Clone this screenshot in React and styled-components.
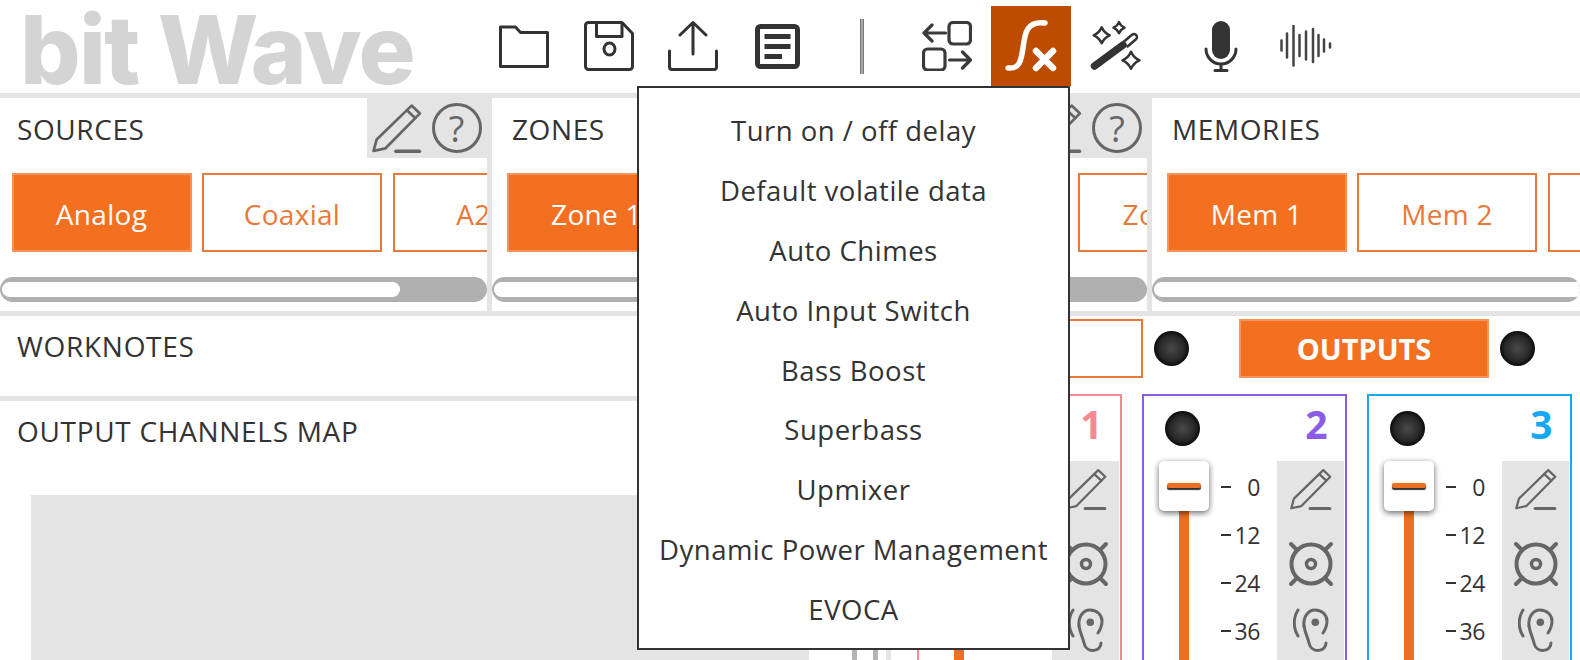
import styled, { createGlobalStyle } from "styled-components";

const GlobalStyle = createGlobalStyle`
  html, body {
    margin: 0;
    padding: 0;
    background: #fff;
    overflow: hidden;
  }
  body {
    font-family: "Open Sans", "Noto Sans", sans-serif;
    color: #333;
  }
`;

const menuItems = [
  "Turn on / off delay",
  "Default volatile data",
  "Auto Chimes",
  "Auto Input Switch",
  "Bass Boost",
  "Superbass",
  "Upmixer",
  "Dynamic Power Management",
  "EVOCA",
];

const channels = [
  { id: 1, color: "#f58a90" },
  { id: 2, color: "#8b5ce5" },
  { id: 3, color: "#16a8f3" },
];

const scaleMarks = ["0", "12", "24", "36"];

/* toolbar icons */
function FolderIcon() {
  return (
    <svg width="50" height="43" viewBox="0 0 50 43" fill="none" stroke="#333" strokeWidth="3" strokeLinejoin="round">
      <path d="M1.5 2h15l5 5.500h27V41.500h-47z" />
    </svg>
  );
}

function SaveIcon() {
  return (
    <svg width="50" height="50" viewBox="0 0 50 50" fill="none" stroke="#333" strokeWidth="3" strokeLinejoin="round">
      <path d="M4 1.500h34l10.500 11V45.500a3 3 0 0 1-3 3H4.500a3 3 0 0 1-3-3V4a3 3 0 0 1 2.500-2.500z" />
      <path d="M12.500 1.500V15.500h25.500V1.500" />
      <ellipse cx="25.500" cy="28" rx="5.500" ry="6" />
    </svg>
  );
}

function UploadIcon() {
  return (
    <svg width="50" height="50" viewBox="0 0 50 50" fill="none" stroke="#333" strokeWidth="3" strokeLinecap="round" strokeLinejoin="round">
      <path d="M25 2V33M12 14L25 1.500L38 14" />
      <path d="M1.500 30V46a2.500 2.500 0 0 0 2.500 2.500H46a2.500 2.500 0 0 0 2.500-2.500V30" />
    </svg>
  );
}

function DocIcon() {
  return (
    <svg width="45" height="45" viewBox="0 0 45 45" fill="none" stroke="#333" strokeWidth="5">
      <rect x="2.500" y="2.500" width="40" height="40" rx="3" />
      <path d="M9.500 12.500H35.500M9.500 22.500H35.500M9.500 32.500H27" />
    </svg>
  );
}

function SwapIcon() {
  return (
    <svg width="50" height="50" viewBox="0 0 50 50" fill="none" stroke="#3a3a3a" strokeWidth="3.200" strokeLinecap="round" strokeLinejoin="round">
      <rect x="27" y="1.500" width="21.500" height="21.500" rx="4" />
      <rect x="1.500" y="28" width="21.500" height="21" rx="4" />
      <path d="M23.500 12H2M10 4L2 12L10 20" />
      <path d="M27.500 39H48.500M40.500 31L48.500 39L40.500 47" />
    </svg>
  );
}

function FxIcon() {
  return (
    <svg width="80" height="80" viewBox="0 0 80 80" fill="none" stroke="#fff" strokeLinecap="round">
      <path d="M17 62C28 63 30 56 32 42C34 26 36 15 54 17" strokeWidth="5.500" />
      <path d="M45 45L62 62M62 45L45 62" strokeWidth="6.500" />
    </svg>
  );
}

// four point sparkle, slightly hollow sides
const sparkle = (x, y, r) => {
  const c = r * 0.3;
  return `M${x} ${y - r}Q${x + c} ${y - c} ${x + r} ${y}Q${x + c} ${y + c} ${x} ${y + r}Q${x - c} ${y + c} ${x - r} ${y}Q${x - c} ${y - c} ${x} ${y - r}z`;
};

function WandIcon() {
  return (
    <svg width="51" height="50" viewBox="0 0 51 50" fill="none" stroke="#333" strokeLinecap="round" strokeLinejoin="round">
      <path d="M4.500 45L33 24" strokeWidth="7.500" />
      <path d="M34 20.500L42 13.800a3 3 0 0 1 4 4.500L37.500 25.500" strokeWidth="2.500" />
      <path d={sparkle(11.7, 14.3, 8)} strokeWidth="2.500" />
      <path d={sparkle(29, 6.7, 5.500)} strokeWidth="2.500" />
      <path d={sparkle(41, 39.3, 8.500)} strokeWidth="2.500" />
    </svg>
  );
}

function MicIcon() {
  return (
    <svg width="34" height="51" viewBox="0 0 34 51" fill="none" stroke="#333" strokeLinecap="round">
      <rect x="8" y="0" width="18" height="38" rx="9" fill="#333" stroke="none" />
      <path d="M2 28a15 15 0 0 0 30 0M17 43V49.500M11 49.500H23" strokeWidth="3" />
    </svg>
  );
}

function WaveIcon() {
  const bars = [
    [1.500, 5], [7, 12], [13.500, 20], [19.500, 10.500], [26, 14],
    [33, 16.500], [38.500, 10.500], [44, 6], [50, 2],
  ];
  return (
    <svg width="52" height="42" viewBox="0 0 52 42" stroke="#444" strokeWidth="2.500" strokeLinecap="round">
      {bars.map(([x, h]) => (
        <line key={x} x1={x} x2={x} y1={20.500 - h} y2={20.500 + h} />
      ))}
    </svg>
  );
}

/* panel and channel icons */
function PencilIcon({ size = 50 }) {
  return (
    <svg width={size} height={size} viewBox="0 0 48 48" fill="none" stroke="#666" strokeWidth="2.600" strokeLinejoin="round" strokeLinecap="round">
      <path d="M1.500 46L4.500 35L38 2.500L46 10L13 43.500z" />
      <path d="M33.500 7L41.500 14.500" />
      <path d="M23 46.300H45.500" strokeWidth="3.500" />
    </svg>
  );
}

function SpeakerIcon() {
  return (
    <svg width="46" height="46" viewBox="0 0 46 46" fill="none" stroke="#666" strokeLinecap="round">
      <circle cx="23" cy="23" r="19.500" strokeWidth="4" />
      <circle cx="23" cy="23" r="4.500" strokeWidth="3.500" />
      <path d="M3 3L9 9M43 3L37 9M3 43L9 37M43 43L37 37" strokeWidth="4" />
    </svg>
  );
}

function EarIcon() {
  return (
    <svg width="36" height="44" viewBox="0 0 36 44" fill="none" stroke="#666" strokeWidth="3" strokeLinecap="round">
      <path d="M11 18C10 9 15 2 22 2C29 2 34 7 34 13C34 18 32 22 30 25" />
      <path d="M11 18C12 25 15 30 16 35C17 40 21 42.500 25 42.500C30 42.500 33 39 33 35" />
      <path d="M5 2C0 10 0 20 5 28" />
      <circle cx="22.300" cy="14.300" r="3.800" fill="#666" stroke="none" />
    </svg>
  );
}

function SourcePanel({ title, items, gutter, thumb, inset, columns }) {
  return (
    <Panel>
      <PanelHead>
        <PanelTitle $inset={inset}>{title}</PanelTitle>
        {columns && (
          <PanelTools>
            <ToolSlot><PencilIcon /></ToolSlot>
            <ToolSlot><HelpBadge>?</HelpBadge></ToolSlot>
          </PanelTools>
        )}
      </PanelHead>
      <ButtonStrip $gutter={gutter}>
        {items.map((item, i) => (
          <StripButton key={item} $active={i === 0}>{item}</StripButton>
        ))}
      </ButtonStrip>
      <ScrollTrack>
        <ScrollThumb style={{ width: thumb }} />
      </ScrollTrack>
    </Panel>
  );
}

function Channel({ id, color }) {
  return (
    <ChannelCard $color={color}>
      <ChannelTop>
        <Led />
        <ChannelNumber $color={color}>{id}</ChannelNumber>
      </ChannelTop>
      <ChannelBody>
        <Fader>
          <FaderKnob><FaderMark /></FaderKnob>
          <FaderTrack />
        </Fader>
        <Scale>
          {scaleMarks.map((mark) => (
            <ScaleRow key={mark}>
              <Tick />
              {mark}
            </ScaleRow>
          ))}
        </Scale>
        <ChannelTools>
          <PencilSlot><PencilIcon size={42} /></PencilSlot>
          <SpeakerSlot><SpeakerIcon /></SpeakerSlot>
          <EarSlot><EarIcon /></EarSlot>
        </ChannelTools>
      </ChannelBody>
    </ChannelCard>
  );
}

export default function App() {
  return (
    <Page>
      <GlobalStyle />
      <Header>
        <Logo>bit Wave</Logo>
        <Toolbar>
          <ToolButton><FolderIcon /></ToolButton>
          <ToolButton><SaveIcon /></ToolButton>
          <ToolButton><UploadIcon /></ToolButton>
          <ToolButton><DocIcon /></ToolButton>
          <ToolButton><Divider /></ToolButton>
          <ToolButton><SwapIcon /></ToolButton>
          <ToolButton $active><FxIcon /></ToolButton>
          <ToolButton><WandIcon /></ToolButton>
          <ToolButton $spaced><MicIcon /></ToolButton>
          <ToolButton><WaveIcon /></ToolButton>
        </Toolbar>
      </Header>

      <PanelRow>
        <SourcePanel title="SOURCES" items={["Analog", "Coaxial", "A2B"]} gutter={11.5} inset={17} thumb={398} columns />
        <SourcePanel title="ZONES" items={["Zone 1", "Zone 2", "Zone 3", "Zone 4"]} gutter={15} inset={20.5} thumb={500} columns />
        <SourcePanel title="MEMORIES" items={["Mem 1", "Mem 2", "Mem 3"]} gutter={14.5} inset={20} thumb={480} />
      </PanelRow>

      <Lower>
        <LeftColumn>
          <Worknotes>
            <SectionTitle>WORKNOTES</SectionTitle>
          </Worknotes>
          <OutputMap>
            <SectionTitle>OUTPUT CHANNELS MAP</SectionTitle>
            <MapArea>
              <MapCanvas />
              <MapBar />
              <MapBar />
            </MapArea>
          </OutputMap>
        </LeftColumn>
        <RightColumn>
          <ModeRow>
            <ModeButton>INPUTS</ModeButton>
            <ModeLed />
            <ModeButton $active>OUTPUTS</ModeButton>
            <ModeLed />
          </ModeRow>
          <ChannelRow>
            {channels.map((c) => (
              <Channel key={c.id} id={c.id} color={c.color} />
            ))}
          </ChannelRow>
        </RightColumn>
      </Lower>

      <Menu>
        {menuItems.map((item) => (
          <MenuItem key={item}>{item}</MenuItem>
        ))}
      </Menu>
    </Page>
  );
}

const Page = styled.div`
  position: relative;
  width: 1580px;
  height: 660px;
  overflow: hidden;
  background: #e4e4e4;
`;

const Header = styled.header`
  height: 93px;
  background: #fff;
  display: flex;
  box-sizing: border-box;
  padding-left: 20px;
`;

const Logo = styled.div`
  width: 464px;
  flex: none;
  font-family: Inter, "Liberation Sans", sans-serif;
  font-weight: 800;
  font-size: 95px;
  line-height: 99px;
  letter-spacing: -1.700px;
  color: #d4d4d4;
  white-space: nowrap;
`;

const Toolbar = styled.nav`
  display: flex;
  gap: 4.500px;
`;

const ToolButton = styled.div`
  width: 80px;
  height: 80px;
  margin-top: 6px;
  margin-left: ${(p) => (p.$spaced ? "21px" : "0")};
  display: flex;
  align-items: center;
  justify-content: center;
  background: ${(p) => (p.$active ? "#bd4b00" : "transparent")};
`;

const Divider = styled.div`
  width: 1.500px;
  height: 55px;
  background: #aaa;
  border: solid #777;
  border-width: 0 1px;
`;

const PanelRow = styled.div`
  display: grid;
  grid-template-columns: 486.500px 655.500px 1fr;
  column-gap: 5px;
  margin-top: 5px;
  height: 213px;
`;

const Panel = styled.section`
  background: #fff;
  overflow: hidden;
  display: flex;
  flex-direction: column;
`;

const PanelHead = styled.div`
  height: 60px;
  flex: none;
  display: flex;
  justify-content: space-between;
`;

const PanelTitle = styled.h2`
  margin: 0;
  padding: 11px 0 0 ${(p) => p.$inset}px;
  font-size: 28px;
  line-height: 40px;
  font-weight: 400;
  letter-spacing: 0.600px;
  color: #333;
`;

const PanelTools = styled.div`
  display: flex;
`;

const ToolSlot = styled.div`
  width: 60px;
  height: 60px;
  background: #e4e4e4;
  display: flex;
  align-items: center;
  justify-content: center;
`;

const HelpBadge = styled.div`
  width: 44px;
  height: 44px;
  border: 3px solid #666;
  border-radius: 50%;
  display: flex;
  align-items: center;
  justify-content: center;
  font-size: 36px;
  font-weight: 400;
  color: #666;
`;

const ButtonStrip = styled.div`
  display: flex;
  gap: 10.500px;
  margin-top: 15px;
  height: 79px;
  flex: none;
  padding-left: ${(p) => p.$gutter}px;
`;

const StripButton = styled.div`
  width: 180px;
  flex: none;
  box-sizing: border-box;
  padding-top: 2px;
  display: flex;
  align-items: center;
  justify-content: center;
  border: 2px solid ${(p) => (p.$active ? "#f8955c" : "#e8793a")};
  background: ${(p) => (p.$active ? "#f37021" : "#fff")};
  color: ${(p) => (p.$active ? "#fff" : "#e8793a")};
  font-size: 28px;
  letter-spacing: 0.300px;
  white-space: nowrap;
`;

const ScrollTrack = styled.div`
  margin-top: 25px;
  height: 25px;
  flex: none;
  box-sizing: border-box;
  padding: 5px 2px;
  background: #b0b0b0;
  border-radius: 12.500px;
  overflow: hidden;
`;

const ScrollThumb = styled.div`
  height: 15px;
  background: #fff;
  border-radius: 8px;
`;

const Lower = styled.div`
  display: grid;
  grid-template-columns: 886px 1fr;
  column-gap: 5px;
  margin-top: 5px;
  height: 344px;
`;

const LeftColumn = styled.div`
  display: flex;
  flex-direction: column;
  gap: 5px;
  min-height: 0;
`;

const Worknotes = styled.section`
  height: 80px;
  flex: none;
  background: #fff;
`;

const SectionTitle = styled.h2`
  margin: 0;
  padding: 10px 0 0 17px;
  font-size: 28px;
  line-height: 40px;
  font-weight: 400;
  letter-spacing: 0.700px;
  color: #333;
`;

const OutputMap = styled.section`
  flex: 1;
  min-height: 0;
  background: #fff;
`;

const MapArea = styled.div`
  display: flex;
  height: 200px;
  margin-top: 44px;
  padding-left: 30.500px;
`;

const MapCanvas = styled.div`
  width: 778.500px;
  background: #e4e4e4;
  margin-right: 27px;
`;

const MapBar = styled.div`
  width: 5px;
  margin-left: 16px;
  background: #b4b4b4;
`;

const RightColumn = styled.div`
  background: #fff;
  min-width: 0;
  overflow: hidden;
`;

const ModeRow = styled.div`
  display: flex;
  align-items: center;
  height: 78px;
  padding: 3px 0 16px 2px;
  box-sizing: border-box;
`;

const ModeButton = styled.div`
  width: 250px;
  height: 59px;
  flex: none;
  box-sizing: border-box;
  display: flex;
  align-items: center;
  justify-content: center;
  border: 2px solid ${(p) => (p.$active ? "#f8955c" : "#e8793a")};
  background: ${(p) => (p.$active ? "#f37021" : "#fff")};
  color: ${(p) => (p.$active ? "#fff" : "#e8793a")};
  font-size: 29px;
  font-weight: 700;
  margin-right: 10.500px;
`;

const Led = styled.div`
  width: 35px;
  height: 35px;
  flex: none;
  border-radius: 50%;
  background: radial-gradient(circle, #4a4a4a 0%, #262626 52%, #000 78%);
`;

const ModeLed = styled(Led)`
  margin-right: 50.500px;
`;

const ChannelRow = styled.div`
  display: flex;
  gap: 20px;
  padding-left: 25.500px;
`;

const ChannelCard = styled.article`
  width: 205px;
  height: 300px;
  flex: none;
  box-sizing: border-box;
  border: 2px solid ${(p) => p.$color};
  background: #fff;
`;

const ChannelTop = styled.div`
  height: 64.500px;
  box-sizing: border-box;
  display: flex;
  justify-content: space-between;
  padding: 15px 17px 0 21px;
`;

const ChannelNumber = styled.div`
  font-size: 39px;
  line-height: 26px;
  font-weight: 700;
  color: ${(p) => p.$color};
`;

const ChannelBody = styled.div`
  display: flex;
  height: 240px;
  padding-left: 15.500px;
`;

const Fader = styled.div`
  width: 50px;
  flex: none;
  display: flex;
  flex-direction: column;
  align-items: center;
`;

const FaderKnob = styled.div`
  width: 50px;
  height: 50px;
  flex: none;
  background: #fff;
  border-radius: 5px;
  box-shadow: 0 2px 6px rgba(0, 0, 0, 0.6);
  display: flex;
  align-items: center;
  justify-content: center;
  position: relative;
`;

const FaderMark = styled.div`
  width: 34px;
  height: 5px;
  border-radius: 2px;
  background: #ec6f23;
  box-shadow: 0 2px 1px #333;
`;

const FaderTrack = styled.div`
  width: 10px;
  flex: 1;
  background: #ec6f23;
`;

const Scale = styled.div`
  width: 39px;
  flex: none;
  margin-left: 12px;
  padding-top: 2px;
`;

const ScaleRow = styled.div`
  height: 48px;
  display: flex;
  align-items: center;
  justify-content: space-between;
  font-size: 23px;
  letter-spacing: -0.400px;
  color: #333;
`;

const Tick = styled.span`
  width: 10px;
  height: 2px;
  background: #333;
`;

const ChannelTools = styled.div`
  width: 67px;
  flex: none;
  margin-left: 17px;
  background: #e4e4e4;
  display: flex;
  flex-direction: column;
  align-items: center;
`;

const PencilSlot = styled.div`
  height: 42px;
  margin-top: 7px;
`;

const SpeakerSlot = styled.div`
  height: 46px;
  margin-top: 31px;
`;

const EarSlot = styled.div`
  height: 44px;
  margin-top: 21px;
`;

const Menu = styled.div`
  position: absolute;
  z-index: 10;
  top: 86px;
  left: 637px;
  width: 433px;
  height: 564px;
  box-sizing: border-box;
  padding-top: 13px;
  background: #fff;
  border: 2px solid #333;
`;

const MenuItem = styled.div`
  height: 59.800px;
  display: flex;
  align-items: center;
  justify-content: center;
  font-size: 27.500px;
  letter-spacing: 0.500px;
  color: #333;
  white-space: nowrap;
`;
